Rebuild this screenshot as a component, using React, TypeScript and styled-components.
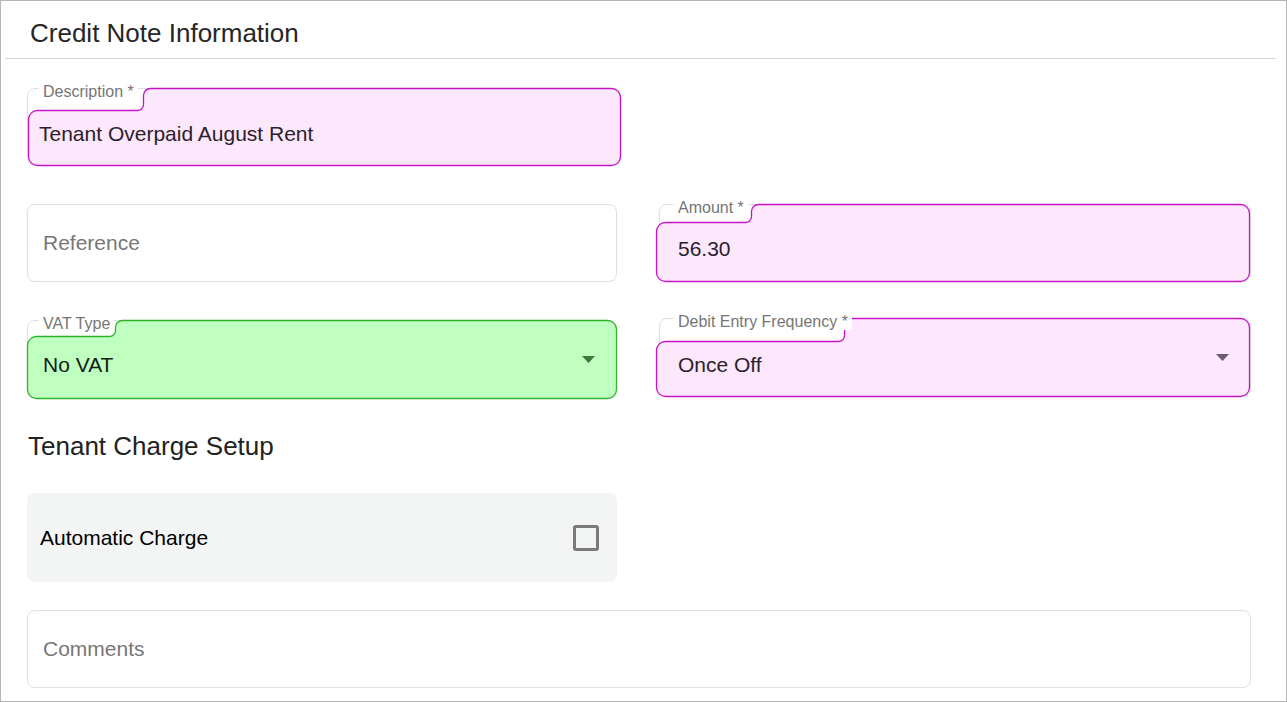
import { createGlobalStyle } from "styled-components";
import styled from "styled-components";

const GlobalStyle = createGlobalStyle`
  html, body {
    margin: 0;
    padding: 0;
    background: #ffffff;
  }
`;

type Tone = "pink" | "green";

const tones: Record<Tone, { fill: string; stroke: string; text: string; arrow: string }> = {
  pink: { fill: "#fde7fd", stroke: "#c514c5", text: "#2a222a", arrow: "#6d5b6d" },
  green: { fill: "#bfffbf", stroke: "#2fb32f", text: "#132013", arrow: "#3d7a3d" },
};

// outline of a filled field: the label tab on the left stays white, the rest is tinted
function notchPath(w: number, h: number, nx: number, ny: number) {
  const r = 9;
  const r1 = 7;
  const r2 = 6;
  const s = 0.5;
  const x = nx + s;
  const y = ny + s;
  return [
    `M${x + r1} ${s}`,
    `H${w - r - s}`,
    `A${r} ${r} 0 0 1 ${w - s} ${r + s}`,
    `V${h - r - s}`,
    `A${r} ${r} 0 0 1 ${w - r - s} ${h - s}`,
    `H${r + s}`,
    `A${r} ${r} 0 0 1 ${s} ${h - r - s}`,
    `V${y + r}`,
    `A${r} ${r} 0 0 1 ${r + s} ${y}`,
    `H${x - r2}`,
    `A${r2} ${r2} 0 0 0 ${x} ${y - r2}`,
    `V${r1 + s}`,
    `A${r1} ${r1} 0 0 1 ${x + r1} ${s}`,
    "Z",
  ].join(" ");
}

interface FieldProps {
  width: number;
  height?: number;
  label?: string;
  value?: string;
  placeholder?: string;
  tone?: Tone;
  notchX?: number;
  notchY?: number;
  shift?: number;
  overlayWidth?: number;
  padLeft?: number;
  labelLeft?: number;
  padTop?: number;
  raise?: number;
  select?: boolean;
}

function Field(props: FieldProps) {
  const {
    width,
    height = 78,
    label,
    value,
    placeholder,
    tone,
    notchX = 0,
    notchY = 0,
    shift = 0,
    overlayWidth,
    padLeft = 16,
    labelLeft = 16,
    padTop = 0,
    raise = 0,
    select,
  } = props;
  const colors = tone ? tones[tone] : null;
  const ow = overlayWidth ?? width - shift;

  return (
    <FieldBox $w={width} $h={height} $pt={padTop} $pl={padLeft} $raise={raise}>
      {colors ? (
        <Overlay $left={shift - 1} width={ow} height={height} viewBox={`0 0 ${ow} ${height}`}>
          <path d={notchPath(ow, height, notchX, notchY)} fill={colors.fill} stroke={colors.stroke} strokeWidth={1.3} />
        </Overlay>
      ) : null}
      {label ? <FieldLabel $left={labelLeft}>{label}</FieldLabel> : null}
      {value ? (
        <FieldValue $color={colors ? colors.text : "#222"}>{value}</FieldValue>
      ) : (
        <Placeholder>{placeholder}</Placeholder>
      )}
      {select ? (
        <SelectArrow $pt={padTop} width="13" height="7" viewBox="0 0 13 7">
          <path d="M0 0 L6.5 7 L13 0 Z" fill={colors ? colors.arrow : "#757575"} />
        </SelectArrow>
      ) : null}
    </FieldBox>
  );
}

export default function App() {
  return (
    <>
      <GlobalStyle />
      <Frame>
        <Header>
          <Title>Credit Note Information</Title>
        </Header>
        <Body>
          <FormGrid>
            <Field
              width={594}
              label="Description *"
              value="Tenant Overpaid August Rent"
              tone="pink"
              shift={1}
              overlayWidth={593}
              notchX={115}
              notchY={22}
              padLeft={12}
              padTop={14}
            />
            <Spacer />
            <Field width={590} placeholder="Reference" />
            <Field
              width={592}
              label="Amount *"
              value="56.30"
              tone="pink"
              shift={-3}
              overlayWidth={594}
              notchX={95}
              notchY={18}
              padLeft={19}
              labelLeft={19}
              padTop={12}
            />
            <Field
              width={590}
              height={79}
              label="VAT Type"
              value="No VAT"
              tone="green"
              notchX={88}
              notchY={16}
              padTop={10}
              select
            />
            <Field
              width={592}
              height={79}
              label="Debit Entry Frequency *"
              value="Once Off"
              tone="pink"
              shift={-3}
              overlayWidth={594}
              notchX={188}
              notchY={23}
              padLeft={19}
              labelLeft={19}
              padTop={14}
              raise={2}
              select
            />
          </FormGrid>
          <SectionTitle>Tenant Charge Setup</SectionTitle>
          <ToggleRow>
            <ToggleLabel>Automatic Charge</ToggleLabel>
            <CheckBox />
          </ToggleRow>
          <CommentsRow>
            <Field width={1224} placeholder="Comments" />
          </CommentsRow>
        </Body>
      </Frame>
    </>
  );
}

const Frame = styled.div`
  width: 1287px;
  height: 702px;
  box-sizing: border-box;
  border: 1px solid #b5b5b5;
  background: #ffffff;
  overflow: hidden;
  font-family: "Liberation Sans", Arial, sans-serif;
`;

const Header = styled.div`
  margin: 0 10px 0 4px;
  padding: 17px 0 10px 25px;
  border-bottom: 1px solid #d4d4da;
`;

const Title = styled.h2`
  margin: 0;
  font-size: 26px;
  line-height: 30px;
  font-weight: 400;
  color: #262626;
`;

const Body = styled.div`
  padding: 29px 0 0 26px;
  display: flex;
  flex-direction: column;
  align-items: flex-start;
`;

const FormGrid = styled.div`
  display: grid;
  grid-template-columns: 594px 592px;
  column-gap: 38px;
  row-gap: 38px;
  align-items: start;
`;

const Spacer = styled.div``;

const FieldBox = styled.div<{ $w: number; $h: number; $pt: number; $pl: number; $raise: number }>`
  position: relative;
  box-sizing: border-box;
  width: ${(p) => p.$w}px;
  height: ${(p) => p.$h}px;
  margin-top: ${(p) => -p.$raise}px;
  border: 1px solid #e0e0e0;
  border-radius: 8px;
  background: #ffffff;
  display: flex;
  align-items: center;
  padding: ${(p) => p.$pt}px 0 0 ${(p) => p.$pl - 1}px;
`;

const Overlay = styled.svg<{ $left: number }>`
  position: absolute;
  top: -1px;
  left: ${(p) => p.$left}px;
  overflow: visible;
`;

const FieldLabel = styled.span<{ $left: number }>`
  position: absolute;
  top: -5px;
  left: ${(p) => p.$left - 5}px;
  padding: 0 4px;
  background: #ffffff;
  font-size: 16px;
  line-height: 16px;
  color: #757575;
  white-space: nowrap;
`;

const FieldValue = styled.span<{ $color: string }>`
  position: relative;
  font-size: 21px;
  line-height: 24px;
  color: ${(p) => p.$color};
`;

const Placeholder = styled.span`
  font-size: 21px;
  line-height: 24px;
  color: #777777;
`;

const SelectArrow = styled.svg<{ $pt: number }>`
  position: relative;
  margin-left: auto;
  margin-right: 21px;
  margin-top: -${(p) => p.$pt}px;
`;

const SectionTitle = styled.h3`
  margin: 32px 0 0 1px;
  font-size: 26px;
  line-height: 30px;
  font-weight: 400;
  color: #222222;
`;

const ToggleRow = styled.div`
  margin-top: 32px;
  box-sizing: border-box;
  width: 590px;
  height: 89px;
  border-radius: 8px;
  background: #f3f4f4;
  display: flex;
  align-items: center;
  justify-content: space-between;
  padding: 0 18px 0 13px;
`;

const ToggleLabel = styled.span`
  font-size: 21px;
  line-height: 24px;
  color: #000000;
`;

const CheckBox = styled.span`
  box-sizing: border-box;
  width: 26px;
  height: 26px;
  border: 3px solid #7a7a7a;
  border-radius: 3px;
`;

const CommentsRow = styled.div`
  margin-top: 28px;
`;
